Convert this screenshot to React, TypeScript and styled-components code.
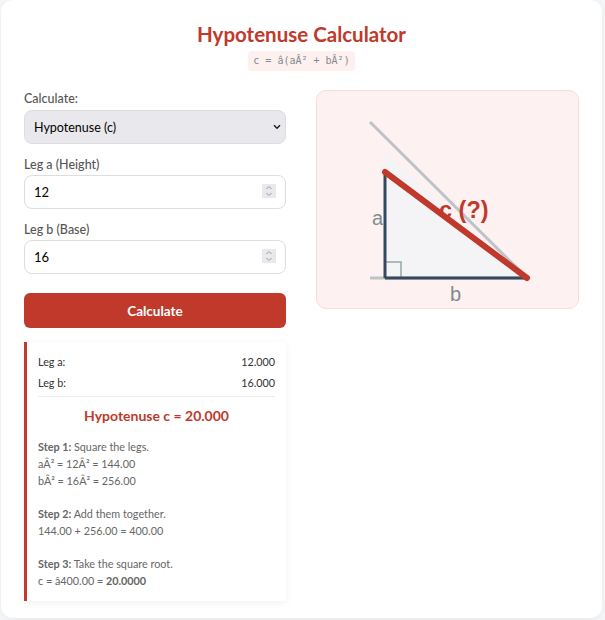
import styled, { createGlobalStyle } from "styled-components"

const chevron = (d: string, color: string, width: number) =>
  `<path d='${d}' fill='none' stroke='${color}' stroke-width='${width}'/>`
const selectArrow = `url("data:image/svg+xml,<svg xmlns='http://www.w3.org/2000/svg' width='8' height='6'>${chevron("M1 1.2 4 4.2 7 1.2", "%23222", 1.5)}</svg>")`
const spinArrows = `url("data:image/svg+xml,<svg xmlns='http://www.w3.org/2000/svg' width='14' height='14'>${chevron("M4.5 5 7 2.5 9.5 5", "%23999", 1)}${chevron("M4.5 9 7 11.5 9.5 9", "%23999", 1)}</svg>")`

const Global = createGlobalStyle`
  * { box-sizing: border-box; }
  body {
    margin: 0;
    background: #f4f6f7;
    font-family: Lato, "Noto Sans", sans-serif;
  }
`

const Card = styled.main`
  width: 601px;
  margin: 0 0 2px 1px;
  padding: 23px 23px 17px 23px;
  background: #fff;
  border-radius: 12px;
  box-shadow: 0 2px 8px rgba(0, 0, 0, 0.05);
`

const Header = styled.header`
  text-align: center;
  margin-bottom: 19px;
`

const Title = styled.h1`
  margin: 0;
  font-size: 20.5px;
  line-height: 22px;
  font-weight: 700;
  color: #c0392b;
`

const Formula = styled.code`
  display: inline-block;
  margin-top: 6px;
  padding: 0 5px;
  height: 20px;
  line-height: 20px;
  border-radius: 4px;
  background: #fdf0ef;
  color: #7f8c8d;
  font-family: "DejaVu Sans Mono", "Liberation Mono", monospace;
  font-size: 10px;
`

const Columns = styled.div`
  display: grid;
  grid-template-columns: 262px 263px;
  gap: 30px;
  align-items: start;
`

const Field = styled.div`
  margin-bottom: 12px;
`

const Label = styled.label`
  display: block;
  padding-top: 1px;
  margin-bottom: 3px;
  font-size: 12.5px;
  line-height: 16px;
  font-weight: 500;
  color: #555;
`

const Select = styled.select`
  display: block;
  width: 100%;
  height: 34px;
  padding: 0 9px;
  border: 1px solid #ddd;
  border-radius: 8px;
  background: #e9e9ed ${selectArrow} no-repeat right 4px center;
  appearance: none;
  color: #000;
  font-family: inherit;
  font-size: 12.5px;
`

const Input = styled.input`
  display: block;
  width: 100%;
  height: 34px;
  margin-top: -1px;
  padding: 0 9px;
  border: 1px solid #ddd;
  border-radius: 8px;
  background: #fff;
  color: #000;
  font-family: inherit;
  font-size: 13px;
  &::-webkit-inner-spin-button {
    appearance: none;
    opacity: 1;
    width: 14px;
    height: 14px;
    background: #e9e9ed ${spinArrows} no-repeat center;
  }
`

const Button = styled.button`
  display: block;
  width: 100%;
  height: 35px;
  margin-top: 19px;
  border: 0;
  border-radius: 6px;
  background: #c0392b;
  color: #fff;
  font-family: inherit;
  font-size: 13.5px;
  font-weight: 700;
`

const Result = styled.section`
  margin-top: 14px;
  padding: 9px 11px 12px 11px;
  border-left: 3px solid #c0392b;
  background: #fff;
  box-shadow: 0 2px 8px rgba(0, 0, 0, 0.06);
`

const Row = styled.div`
  display: flex;
  justify-content: space-between;
  height: 21px;
  font-size: 10.8px;
  line-height: 21px;
  color: #333;
`

const Answer = styled.div`
  margin-top: 3px;
  padding: 10px 0 13px;
  border-top: 1px solid #eee;
  text-align: center;
  font-size: 14px;
  line-height: 18px;
  font-weight: 700;
  color: #c0392b;
`

const Step = styled.p`
  margin: 0 0 16px;
  font-size: 10.8px;
  line-height: 17px;
  color: #666;
  &:last-child {
    margin-bottom: 0;
  }
`

const Diagram = styled.aside`
  height: 219px;
  border: 1px solid #fadbd8;
  border-radius: 10px;
  background: #fdf2f1;
`

const Svg = styled.svg`
  display: block;
`

export default function App() {
  return (
    <>
      <Global />
      <Card>
        <Header>
          <Title>Hypotenuse Calculator</Title>
          <Formula>c = â(aÂ² + bÂ²)</Formula>
        </Header>
        <Columns>
          <div>
            <Field>
              <Label>Calculate:</Label>
              <Select defaultValue="c">
                <option value="c">Hypotenuse (c)</option>
              </Select>
            </Field>
            <Field>
              <Label>Leg a (Height)</Label>
              <Input type="number" defaultValue="12" />
            </Field>
            <Field>
              <Label>Leg b (Base)</Label>
              <Input type="number" defaultValue="16" />
            </Field>
            <Button>Calculate</Button>
            <Result>
              <Row><span>Leg a:</span><span>12.000</span></Row>
              <Row><span>Leg b:</span><span>16.000</span></Row>
              <Answer>Hypotenuse c = 20.000</Answer>
              <Step><b>Step 1:</b> Square the legs.<br />aÂ² = 12Â² = 144.00<br />bÂ² = 16Â² = 256.00</Step>
              <Step><b>Step 2:</b> Add them together.<br />144.00 + 256.00 = 400.00</Step>
              <Step><b>Step 3:</b> Take the square root.<br />c = â400.00 = <b>20.0000</b></Step>
            </Result>
          </div>
          <Diagram>
            <Svg width="261" height="217" viewBox="317 91 261 217">
              <polygon points="385,153 385,278 527,278" fill="#f4f4f7" />
              <line x1="370" y1="122" x2="527" y2="278" stroke="#bdc3c7" strokeWidth="3" />
              <line x1="370" y1="278" x2="527" y2="278" stroke="#bdc3c7" strokeWidth="3" />
              <rect x="385" y="262" width="16" height="16" fill="none" stroke="#95a5a6" strokeWidth="1.5" />
              <line x1="385" y1="172" x2="385" y2="278" stroke="#34495e" strokeWidth="3" />
              <line x1="385" y1="278" x2="527" y2="278" stroke="#34495e" strokeWidth="3" />
              <line x1="385" y1="172" x2="527" y2="278" stroke="#c0392b" strokeWidth="6" strokeLinecap="round" />
              <text x="372" y="225" fontFamily="Liberation Sans" fontSize="20" fill="#7f8c8d">a</text>
              <text x="450" y="301" fontFamily="Liberation Sans" fontSize="20" fill="#7f8c8d">b</text>
              <text x="439" y="218" fontFamily="Liberation Sans" fontSize="23.5" fontWeight="700" fill="#c0392b">c (?)</text>
            </Svg>
          </Diagram>
        </Columns>
      </Card>
    </>
  )
}
